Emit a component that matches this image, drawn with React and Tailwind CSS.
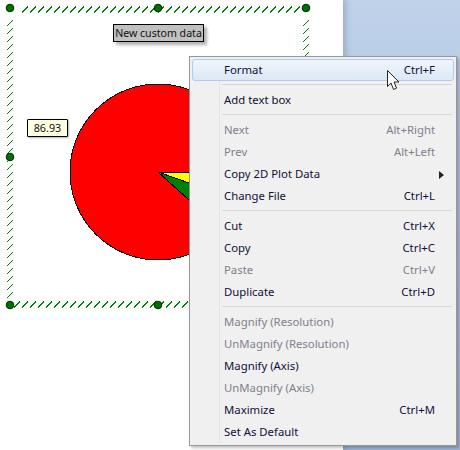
import React from 'react';

const handles = [[10, 8], [158, 8], [306, 8], [10, 157], [10, 305], [158, 305], [306, 305]];

const menu = [
  { label: 'Format', keys: 'Ctrl+F', active: true },
  'sep',
  { label: 'Add text box' },
  'sep',
  { label: 'Next', keys: 'Alt+Right', off: true },
  { label: 'Prev', keys: 'Alt+Left', off: true },
  { label: 'Copy 2D Plot Data', arrow: true },
  { label: 'Change File', keys: 'Ctrl+L' },
  'sep',
  { label: 'Cut', keys: 'Ctrl+X' },
  { label: 'Copy', keys: 'Ctrl+C' },
  { label: 'Paste', keys: 'Ctrl+V', off: true },
  { label: 'Duplicate', keys: 'Ctrl+D' },
  'sep',
  { label: 'Magnify (Resolution)', off: true },
  { label: 'UnMagnify (Resolution)', off: true },
  { label: 'Magnify (Axis)' },
  { label: 'UnMagnify (Axis)', off: true },
  { label: 'Maximize', keys: 'Ctrl+M' },
  { label: 'Set As Default' },
];

// hatched selection frame + pie, all one drawing
const Plot = () => {
  const hatch = [];
  for (let x = 22; x < 302; x += 8) {
    hatch.push(<path key={'t' + x} d={`M${x} 12.5L${x + 6} 6.5`} />);
    hatch.push(<path key={'b' + x} d={`M${x - 8} 307.5L${x - 2} 301.5`} />);
  }
  for (let y = 20; y < 300; y += 8) {
    hatch.push(<path key={'l' + y} d={`M6.5 ${y + 6.5}L12.5 ${y + 0.5}`} />);
    hatch.push(<path key={'r' + y} d={`M302.5 ${y + 6.5}L308.5 ${y + 0.5}`} />);
  }
  return (
    <svg width="343" height="450" className="block">
      <g stroke="#008000" strokeWidth="1" fill="none" shapeRendering="crispEdges">{hatch}</g>
      <g shapeRendering="crispEdges">
        <circle cx="158" cy="172" r="88" fill="#ff0000" stroke="#000" />
        <path d="M158 172L240 201L240 246Z" fill="#008000" stroke="#000" />
        <path d="M158 172L240 172L240 201Z" fill="#ffff00" stroke="#000" />
      </g>
      {handles.map(([x, y]) => (
        <circle key={x + '-' + y} cx={x} cy={y} r="3.8" fill="#007000" stroke="#002800" />
      ))}
    </svg>
  );
};

const Row = ({ item }) => (
  <div
    className={`relative flex items-center h-[22px] pl-[31px] pr-[18px] rounded-[3px] border ${
      item.active
        ? 'border-[#aeccf2] bg-gradient-to-b from-[#f0f5fb] to-[#dce8f7]'
        : 'border-transparent'
    } ${item.off ? 'text-[#80808c]' : 'text-[#101038]'}`}
  >
    <span className="flex-1">{item.label}</span>
    {item.keys && <span>{item.keys}</span>}
    {item.arrow && (
      <svg width="5" height="8" viewBox="0 0 5 8" className="absolute right-[9px] top-[7px]">
        <path d="M0 0L5 4L0 8Z" fill="#222" />
      </svg>
    )}
  </div>
);

const App = () => {
  return (
    <div className="relative w-[460px] h-[450px] overflow-hidden flex bg-gradient-to-b from-[#bfd2ea] to-[#9fb6d5] font-['Noto_Sans',sans-serif]">
      <div className="w-[343px] h-full bg-white shadow-[3px_0_6px_rgba(90,110,140,0.35)]">
        <Plot />
      </div>

      <div className="absolute left-[113px] top-[24px] w-[91px] h-[18px] pt-px flex items-center justify-center bg-[#c0c0c0] border border-black text-[10.6px] text-[#111] shadow-[3px_3px_3px_rgba(0,0,0,0.3)] whitespace-nowrap">
        New custom data
      </div>
      <div className="absolute left-[27px] top-[119px] w-[41px] h-[18px] flex items-center justify-center bg-[#ffffe1] border border-black rounded-[1px] text-[10.8px] text-[#111] shadow-[1px_1px_2px_rgba(0,0,0,0.3)]">
        86.93
      </div>

      <div className="absolute left-[189px] top-[56px] w-[268px] h-[390px] bg-[#f0f0f0] border border-[#979797] p-[2px] text-[11.35px] shadow-[2px_2px_3px_rgba(0,0,0,0.25)]">
        <div className="absolute left-[29px] top-[2px] bottom-[2px] w-px bg-[#e2e3e3]" />
        {menu.map((item, i) =>
          item === 'sep' ? (
            <div key={i} className="h-[8px] flex items-center pl-[30px] pr-[2px]">
              <div className="w-full h-[2px] border-t border-[#d7d7d7] border-b-white" />
            </div>
          ) : (
            <Row key={i} item={item} />
          )
        )}
      </div>

      <svg width="13" height="21" viewBox="0 0 13 21" className="absolute left-[387px] top-[70px]">
        <path d="M0.5 0.5V16.5L4 13L6.5 19.5L9.5 18.2L7 12H12Z" fill="#fff" stroke="#222" strokeWidth="1" />
      </svg>
    </div>
  );
};

export default App;
